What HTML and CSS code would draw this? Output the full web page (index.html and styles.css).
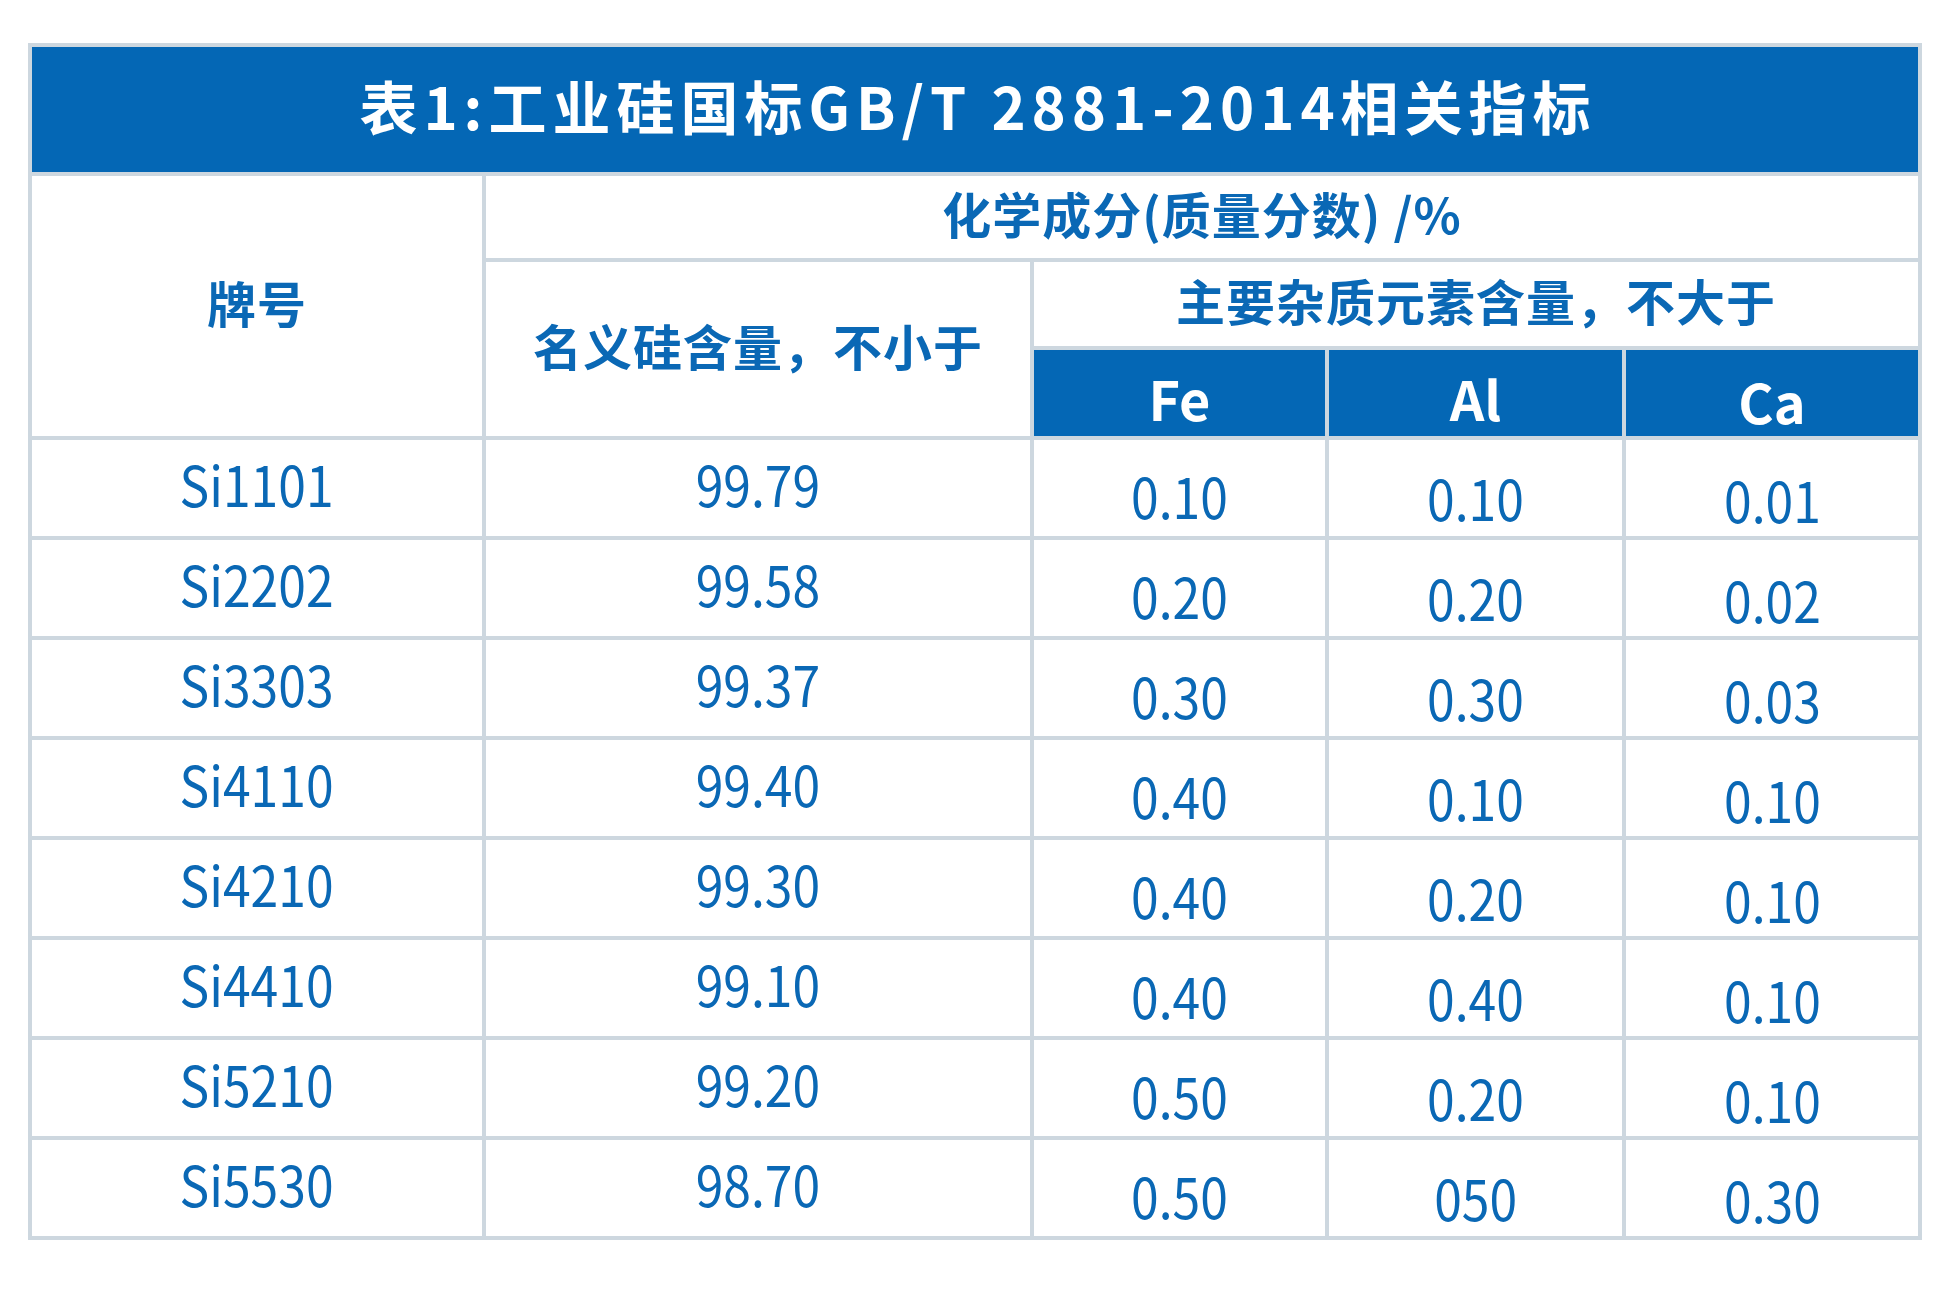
FILE: index.html
```html
<!DOCTYPE html>
<html lang="zh-CN">
<head>
<meta charset="utf-8">
<title>表1:工业硅国标GB/T 2881-2014相关指标</title>
<link rel="stylesheet" href="styles.css">
</head>
<body>
<div class="page">
  <div class="grid">
    <div class="cell title"><span class="title-text">表1:工业硅国标GB/T 2881-2014相关指标</span></div>

    <div class="cell head brand">牌号</div>
    <div class="cell head chem">化学成分(质量分数) /%</div>
    <div class="cell head nominal">名义硅含量，不小于</div>
    <div class="cell head impurity">主要杂质元素含量，不大于</div>
    <div class="cell el el-fe">Fe</div>
    <div class="cell el el-al">Al</div>
    <div class="cell el el-ca">Ca</div>

    <div class="cell d c1"><span>Si1101</span></div><div class="cell d c2"><span>99.79</span></div><div class="cell d c3"><span>0.10</span></div><div class="cell d c4"><span>0.10</span></div><div class="cell d c5"><span>0.01</span></div>
    <div class="cell d c1"><span>Si2202</span></div><div class="cell d c2"><span>99.58</span></div><div class="cell d c3"><span>0.20</span></div><div class="cell d c4"><span>0.20</span></div><div class="cell d c5"><span>0.02</span></div>
    <div class="cell d c1"><span>Si3303</span></div><div class="cell d c2"><span>99.37</span></div><div class="cell d c3"><span>0.30</span></div><div class="cell d c4"><span>0.30</span></div><div class="cell d c5"><span>0.03</span></div>
    <div class="cell d c1"><span>Si4110</span></div><div class="cell d c2"><span>99.40</span></div><div class="cell d c3"><span>0.40</span></div><div class="cell d c4"><span>0.10</span></div><div class="cell d c5"><span>0.10</span></div>
    <div class="cell d c1"><span>Si4210</span></div><div class="cell d c2"><span>99.30</span></div><div class="cell d c3"><span>0.40</span></div><div class="cell d c4"><span>0.20</span></div><div class="cell d c5"><span>0.10</span></div>
    <div class="cell d c1"><span>Si4410</span></div><div class="cell d c2"><span>99.10</span></div><div class="cell d c3"><span>0.40</span></div><div class="cell d c4"><span>0.40</span></div><div class="cell d c5"><span>0.10</span></div>
    <div class="cell d c1"><span>Si5210</span></div><div class="cell d c2"><span>99.20</span></div><div class="cell d c3"><span>0.50</span></div><div class="cell d c4"><span>0.20</span></div><div class="cell d c5"><span>0.10</span></div>
    <div class="cell d c1"><span>Si5530</span></div><div class="cell d c2"><span>98.70</span></div><div class="cell d c3"><span>0.50</span></div><div class="cell d c4"><span>050</span></div><div class="cell d c5"><span>0.30</span></div>
  </div>
</div>
</body>
</html>
```
FILE: styles.css
```css
html, body {
  margin: 0;
  padding: 0;
  background: #ffffff;
}

.page {
  padding: 43px 0 56px 28px;
  font-family: "Noto Sans CJK SC", "Noto Sans", sans-serif;
}

.grid {
  display: grid;
  width: 1894px;
  box-sizing: border-box;
  grid-template-columns: 450px 544px 291px 293px 292px;
  grid-template-rows: 125px 82px 84px 86px repeat(8, 96px);
  gap: 4px;
  padding: 4px;
  background: #cdd7df;
}

.cell {
  background: #ffffff;
  display: flex;
  align-items: center;
  justify-content: center;
  color: #0a68b5;
  line-height: 1;
  white-space: nowrap;
  padding-bottom: 10px;
}

.title {
  grid-column: 1 / -1;
  background: #0467b5;
  color: #ffffff;
  font-weight: 700;
  font-size: 58px;
  letter-spacing: 6px;
  padding-left: 6px;
}

.head {
  font-weight: 700;
  font-size: 49px;
  letter-spacing: 1px;
}

.brand {
  grid-column: 1;
  grid-row: 2 / 5;
}

.chem {
  grid-column: 2 / 6;
  grid-row: 2;
}

.nominal {
  grid-column: 2;
  grid-row: 3 / 5;
}

.impurity {
  grid-column: 3 / 6;
  grid-row: 3;
}

.el {
  background: #0467b5;
  color: #ffffff;
  font-weight: 700;
  font-size: 54px;
  padding-top: 10px;
  padding-bottom: 0;
}

.el-ca {
  padding-top: 16px;
}

.d {
  font-size: 56px;
  font-weight: 400;
}

.d span {
  display: inline-block;
  transform: scaleX(0.89);
}

.c3 {
  padding-top: 24px;
}

.c4 {
  padding-top: 28px;
}

.c5 {
  padding-top: 32px;
}
```
